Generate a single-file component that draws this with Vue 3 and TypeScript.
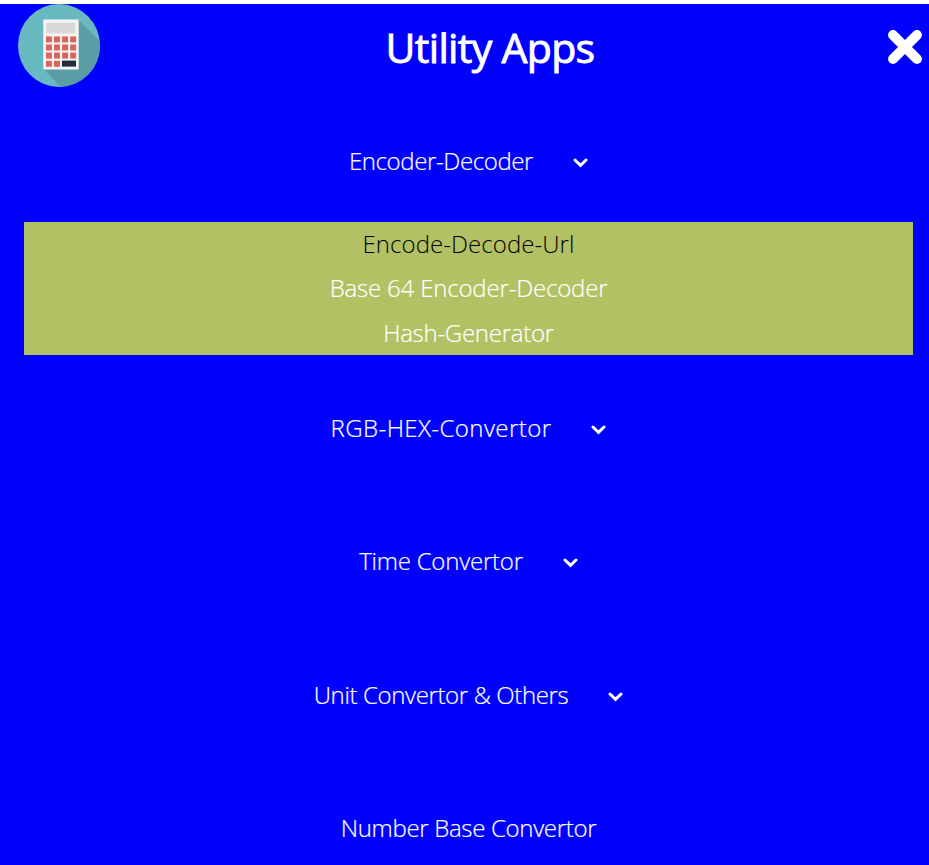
<script setup lang="ts">
interface MenuItem {
  label: string
  key: string
  expandable: boolean
  children?: { label: string; key: string; active?: boolean }[]
}

const items: MenuItem[] = [
  {
    label: 'Encoder-Decoder',
    key: 'encoder',
    expandable: true,
    children: [
      { label: 'Encode-Decode-Url', key: 'url', active: true },
      { label: 'Base 64 Encoder-Decoder', key: 'base64' },
      { label: 'Hash-Generator', key: 'hash' },
    ],
  },
  { label: 'RGB-HEX-Convertor', key: 'rgb', expandable: true },
  { label: 'Time Convertor', key: 'time', expandable: true },
  { label: 'Unit Convertor & Others', key: 'unit', expandable: true },
  { label: 'Number Base Convertor', key: 'number', expandable: false },
]

const keyRows = [36.4, 44.5, 52.6, 60.8]
const keyCols = [46, 54, 62.1, 70.2]
</script>

<template>
  <div class="page">
    <header class="header">
      <svg class="logo" viewBox="18 4 82 83" aria-label="Calculator">
        <defs>
          <clipPath id="disc"><ellipse cx="59" cy="45.5" rx="41" ry="41.5" /></clipPath>
        </defs>
        <g clip-path="url(#disc)">
          <rect x="18" y="4" width="82" height="83" fill="#69b9c1" />
          <path d="M78.5 20L100 41.5V87H60.5L44 69.5Z" fill="#5a9da5" />
        </g>
        <rect x="43.3" y="19.5" width="35.4" height="50" fill="#f7f5f4" />
        <rect x="46.3" y="22.8" width="29" height="10.5" fill="#d8d8d8" />
        <template v-for="(y, r) in keyRows" :key="y">
          <template v-for="(x, c) in keyCols" :key="x">
            <rect v-if="r < 3 || c < 2" :x="x" :y="y" width="5.9" height="6" fill="#d9655b" />
          </template>
        </template>
        <rect x="62" y="60.6" width="14" height="6" fill="#232c3b" />
      </svg>
      <h1 class="title"><span>Utility Apps</span></h1>
      <button class="close" aria-label="Close">
        <svg viewBox="0 0 34 34"><path d="M5 5L29 29M29 5L5 29" /></svg>
      </button>
    </header>
    <nav class="menu">
      <template v-for="item in items" :key="item.key">
        <div class="item">
          <span class="label" :class="item.key">{{ item.label }}</span>
          <svg v-if="item.expandable" class="chevron" viewBox="0 0 15 10">
            <path d="M2 2L7.5 7.3L13 2" />
          </svg>
        </div>
        <div v-if="item.children" class="submenu">
          <div v-for="child in item.children" :key="child.key" class="child" :class="{ active: child.active }">
            <span class="label" :class="child.key">{{ child.label }}</span>
          </div>
        </div>
      </template>
    </nav>
  </div>
</template>

<style>
body {
  background: #00f;
  overflow: hidden;
}
</style>

<style scoped>
.page {
  box-sizing: border-box;
  height: 865px;
  overflow: hidden;
  border-top: 4px solid #fff;
  background: #00f;
  color: #fff;
  font-family: 'Open Sans', 'Noto Sans', sans-serif;
  font-weight: 300;
}
.header {
  display: grid;
  grid-template-columns: 82px 1fr 34px;
  height: 84px;
  padding: 0 7px 0 18px;
}
.logo {
  width: 82px;
  height: 83px;
}
.title {
  margin: 0 0 0 -8px;
  font-size: 41px;
  font-weight: 400;
  -webkit-text-stroke: 0.9px #fff;
  letter-spacing: -0.68px;
  line-height: 86px;
  text-align: center;
  white-space: nowrap;
}
.close {
  width: 34px;
  height: 34px;
  margin: 26px 0 0;
  padding: 0;
  border: 0;
  background: none;
}
.close svg {
  display: block;
}
.close path {
  fill: none;
  stroke: #fff;
  stroke-width: 9.9;
  stroke-linecap: round;
}
.menu {
  padding: 0 16px 0 24px;
}
.item {
  box-sizing: border-box;
  display: flex;
  justify-content: center;
  align-items: center;
  gap: 40px;
  height: 133.5px;
  padding-top: 11.5px;
  font-size: 24px;
  white-space: nowrap;
}
.label {
  -webkit-text-stroke: 0.2px currentColor;
}
.chevron {
  width: 15px;
  height: 10px;
  margin-top: 5.5px;
}
.chevron path {
  fill: none;
  stroke: #fff;
  stroke-width: 3;
  stroke-linecap: round;
}
.submenu {
  height: 133px;
  background: #b2c164;
}
.child {
  height: 44.5px;
  font-size: 24px;
  line-height: 44px;
  text-align: center;
}
.active {
  color: #000;
}
.active .label {
  -webkit-text-stroke: 0;
}
.encoder {
  letter-spacing: -0.38px;
}
.url {
  letter-spacing: 0.06px;
}
.base64 {
  letter-spacing: -0.18px;
}
.hash {
  letter-spacing: -0.27px;
}
.rgb {
  letter-spacing: 0.42px;
}
.time {
  letter-spacing: -0.23px;
}
.unit {
  letter-spacing: -0.37px;
}
.number {
  letter-spacing: -0.32px;
}
</style>
